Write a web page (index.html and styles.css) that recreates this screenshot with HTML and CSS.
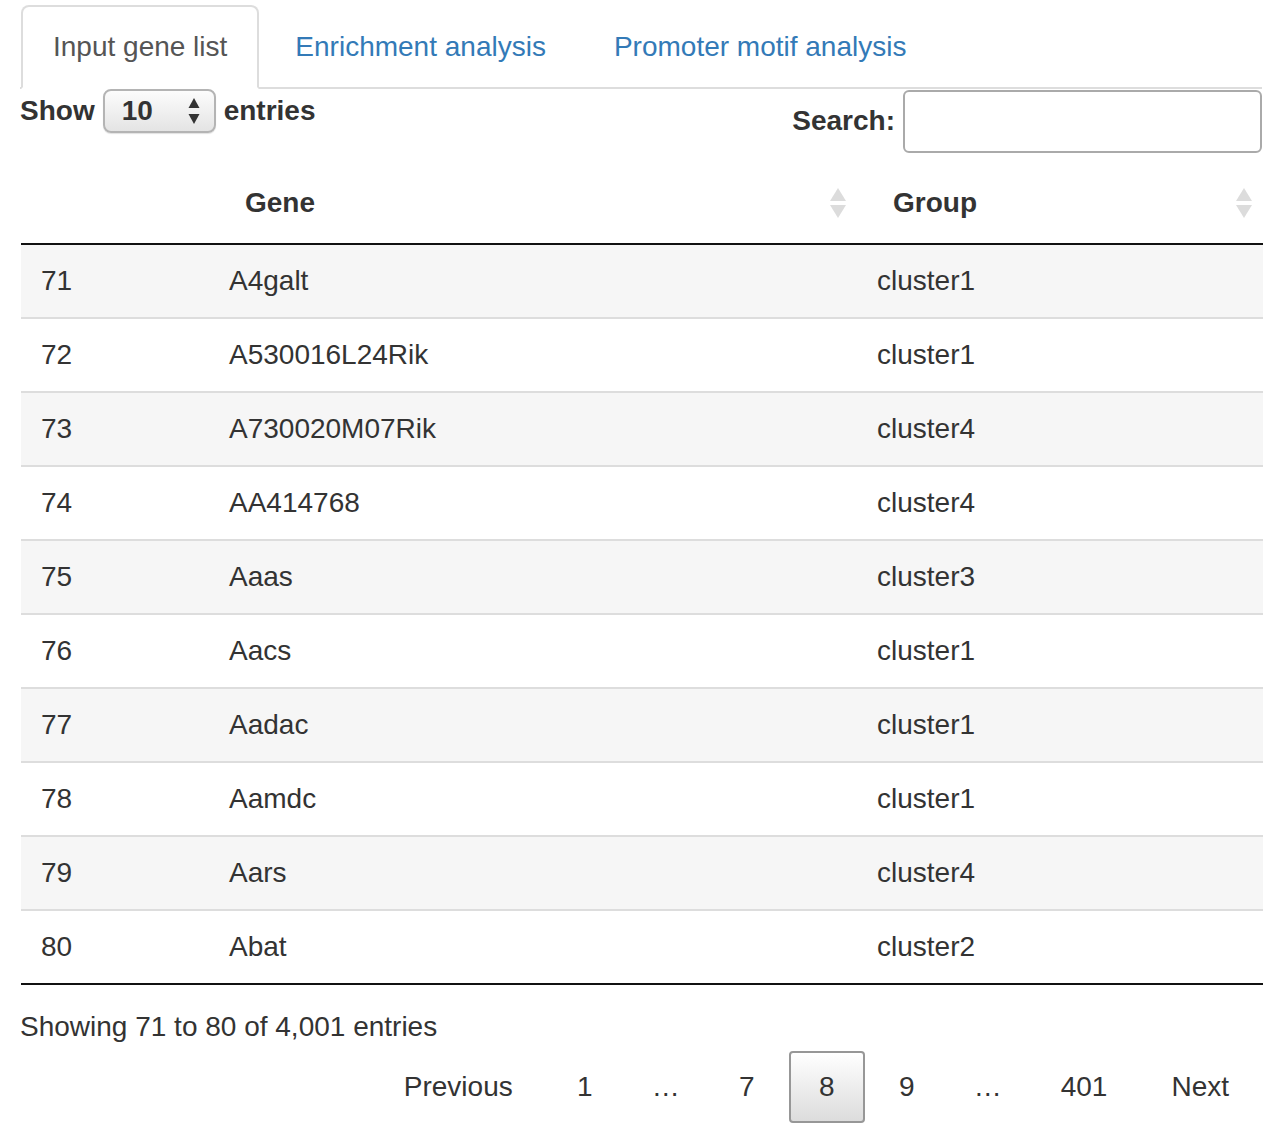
FILE: index.html
```html
<!DOCTYPE html>
<html>
<head>
<meta charset="utf-8">
<link rel="stylesheet" href="styles.css">
</head>
<body>
<div class="page">
  <ul class="tabs">
    <li class="tab active"><a>Input gene list</a></li>
    <li class="tab"><a>Enrichment analysis</a></li>
    <li class="tab"><a>Promoter motif analysis</a></li>
  </ul>

  <div class="controls">
    <label class="length">Show
      <span class="select"><span class="select-val">10</span>
        <svg class="select-arrows" width="12" height="28" viewBox="0 0 12 28"><path d="M6 1 L11.5 11 L0.5 11 Z" fill="#333"/><path d="M0.5 17 L11.5 17 L6 27 Z" fill="#333"/></svg>
      </span>
      entries</label>
    <label class="filter">Search:<span class="search-input"></span></label>
  </div>

  <table class="data">
    <colgroup><col class="c1"><col class="c2"><col class="c3"></colgroup>
    <thead>
      <tr>
        <th class="idx"></th>
        <th><div class="th-in"><span>Gene</span><svg class="sort" width="16" height="30" viewBox="0 0 16 30"><path d="M8 0 L16 13 L0 13 Z" fill="#dcdcdc"/><path d="M0 17 L16 17 L8 30 Z" fill="#dcdcdc"/></svg></div></th>
        <th><div class="th-in"><span>Group</span><svg class="sort" width="16" height="30" viewBox="0 0 16 30"><path d="M8 0 L16 13 L0 13 Z" fill="#dcdcdc"/><path d="M0 17 L16 17 L8 30 Z" fill="#dcdcdc"/></svg></div></th>
      </tr>
    </thead>
    <tbody>
      <tr class="odd"><td>71</td><td>A4galt</td><td>cluster1</td></tr>
      <tr><td>72</td><td>A530016L24Rik</td><td>cluster1</td></tr>
      <tr class="odd"><td>73</td><td>A730020M07Rik</td><td>cluster4</td></tr>
      <tr><td>74</td><td>AA414768</td><td>cluster4</td></tr>
      <tr class="odd"><td>75</td><td>Aaas</td><td>cluster3</td></tr>
      <tr><td>76</td><td>Aacs</td><td>cluster1</td></tr>
      <tr class="odd"><td>77</td><td>Aadac</td><td>cluster1</td></tr>
      <tr><td>78</td><td>Aamdc</td><td>cluster1</td></tr>
      <tr class="odd"><td>79</td><td>Aars</td><td>cluster4</td></tr>
      <tr><td>80</td><td>Abat</td><td>cluster2</td></tr>
    </tbody>
  </table>

  <div class="info">Showing 71 to 80 of 4,001 entries</div>
  <div class="paginate">
    <a class="pbtn">Previous</a>
    <a class="pbtn">1</a>
    <span class="ellipsis">…</span>
    <a class="pbtn">7</a>
    <a class="pbtn current">8</a>
    <a class="pbtn">9</a>
    <span class="ellipsis">…</span>
    <a class="pbtn">401</a>
    <a class="pbtn">Next</a>
  </div>
</div>
</body>
</html>
```

FILE: styles.css
```css
html, body {
  margin: 0;
  padding: 0;
  background: #fff;
}
body {
  font-family: "Liberation Sans", Arial, Helvetica, sans-serif;
  font-size: 28px;
  line-height: 40px;
  color: #333;
}
.page {
  width: 1242px;
  padding: 5px 0 0 20px;
}
.tabs {
  list-style: none;
  margin: 0;
  padding: 0;
  display: flex;
  border-bottom: 2px solid #ddd;
}
.tab {
  margin-bottom: -2px;
  margin-right: 4px;
}
.tab a {
  display: block;
  padding: 20px 30px;
  border: 2px solid transparent;
  border-radius: 8px 8px 0 0;
  color: #337ab7;
  line-height: 40px;
}
.tab.active a {
  color: #555;
  background: #fff;
  border-color: #ddd #ddd transparent #ddd;
  margin-left: 1px;
}
.controls {
  display: flex;
  justify-content: space-between;
  align-items: flex-start;
  height: 74px;
}
.length, .filter {
  font-weight: bold;
  display: flex;
  align-items: center;
}
.length {
  height: 44px;
}
.select {
  display: inline-flex;
  align-items: center;
  justify-content: space-between;
  box-sizing: border-box;
  width: 113px;
  height: 44px;
  margin: 0 8px;
  padding: 0 14px 0 17px;
  border: 2px solid #b4b4b4;
  border-radius: 8px;
  background: linear-gradient(to bottom, #fcfcfc 0%, #f0f0f0 50%, #e4e4e4 100%);
  box-shadow: 0 1px 1px rgba(0,0,0,0.12);
  font-weight: bold;
}
.select-val {
  line-height: 40px;
}
.filter {
  height: 64px;
}
.search-input {
  display: block;
  box-sizing: border-box;
  width: 359px;
  height: 63px;
  margin-left: 8px;
  border: 2px solid #aaa;
  border-radius: 6px;
  background: #fff;
}
.data {
  width: 1242px;
  margin-left: 1px;
  border-collapse: collapse;
  table-layout: fixed;
  border-bottom: 2px solid #111;
}
.c1 { width: 188px; }
.c2 { width: 648px; }
.c3 { width: 406px; }
.data th {
  text-align: left;
  font-weight: bold;
  padding: 20px 11px 20px 36px;
  border-bottom: 2px solid #111;
  line-height: 40px;
}
.th-in {
  display: flex;
  justify-content: space-between;
  align-items: center;
}
.sort {
  display: block;
}
.data td {
  padding: 16px 20px;
  line-height: 40px;
  border-top: 2px solid #ddd;
}
.data tbody tr:first-child td {
  border-top: none;
}
.data tr.odd td {
  background: #f6f6f6;
}
.info {
  padding-top: 22px;
  line-height: 40px;
}
.paginate {
  display: flex;
  justify-content: flex-end;
  align-items: center;
  gap: 4px;
  margin-top: 4px;
  padding-right: 3px;
}
.pbtn {
  display: block;
  padding: 14px 28px;
  border: 2px solid transparent;
  border-radius: 4px;
  line-height: 40px;
  color: #333;
  min-width: 16px;
  text-align: center;
}
.pbtn.current {
  border-color: #979797;
  background: linear-gradient(to bottom, #fff 0%, #dcdcdc 100%);
}
.ellipsis {
  padding: 0 25px;
  line-height: 40px;
}
```
